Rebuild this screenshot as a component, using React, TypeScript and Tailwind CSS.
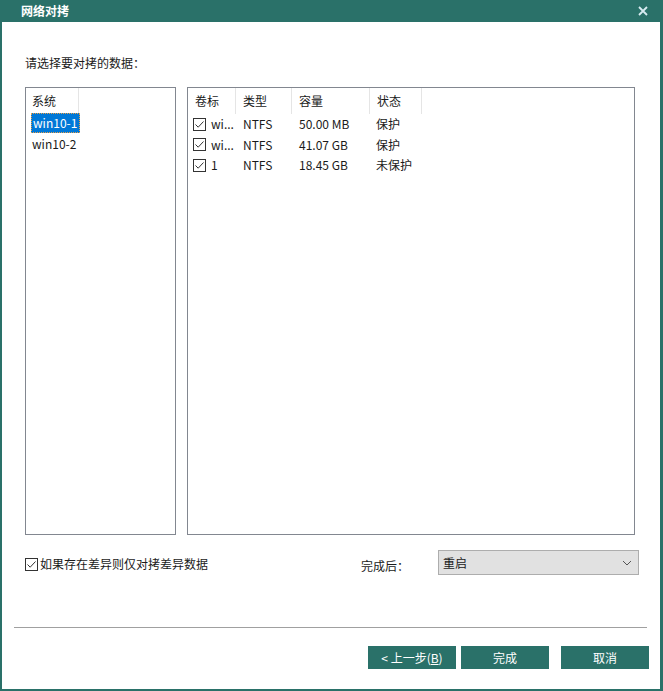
import React from "react";

const font = {
  fontFamily: '"Noto Sans CJK SC", "Noto Sans", sans-serif',
};

const teal = "bg-[#2a7169]";

interface Volume {
  label: string;
  type: string;
  size: string;
  status: string;
}

const volumes: Volume[] = [
  { label: "wi...", type: "NTFS", size: "50.00 MB", status: "保护" },
  { label: "wi...", type: "NTFS", size: "41.07 GB", status: "保护" },
  { label: "1", type: "NTFS", size: "18.45 GB", status: "未保护" },
];

function Check() {
  return (
    <span className="flex h-[13px] w-[13px] shrink-0 items-center justify-center border border-[#333] bg-white">
      <svg width="11" height="11" viewBox="0 0 11 11" fill="none">
        <path d="M1.5 5.5 L4.2 8.2 L9.5 2.5" stroke="#333" strokeWidth="1" />
      </svg>
    </span>
  );
}

function HeaderCell({ w, children }: { w: string; children?: React.ReactNode }) {
  return (
    <div className={`${w} flex h-[26px] items-center border-r border-[#e5e5e5] pl-[7px]`}>
      {children}
    </div>
  );
}

export default function App() {
  return (
    <div
      className="flex h-[691px] w-[663px] flex-col border-b-2 border-l-2 border-r-[3px] border-[#2a7169] bg-white text-[12px] text-[#1a1a1a]"
      style={font}
    >
      {/* title bar */}
      <div className={`${teal} flex h-[22px] shrink-0 items-center justify-between pl-[19px] pr-[12px]`}>
        <span className="text-[12px] font-bold text-white">网络对拷</span>
        <svg width="10" height="10" viewBox="0 0 10 10">
          <path d="M1 1 L9 9 M9 1 L1 9" stroke="#d8ecf2" strokeWidth="1.8" />
        </svg>
      </div>

      <div className="flex flex-1 flex-col">
        <div className="pl-[23px] pt-[32px] leading-[18px]">请选择要对拷的数据：</div>

        {/* panels */}
        <div className="mt-[15px] flex gap-[11px] pl-[23px]">
          <div className="h-[448px] w-[151px] border border-[#828790] bg-white">
            <div className="flex h-[25px] w-[53px] items-center border-r border-[#e5e5e5] pl-[6px]">
              系统
            </div>
            <div className="ml-[5px] flex h-[20px] w-[49px] items-center border border-dotted border-[#e8a04a] bg-[#0078d7] pl-[1px] text-white">
              win10-1
            </div>
            <div className="ml-[6px] flex h-[21px] items-center">win10-2</div>
          </div>

          <div className="h-[448px] w-[448px] border border-[#828790] bg-white">
            <div className="flex">
              <HeaderCell w="w-[48px]">卷标</HeaderCell>
              <HeaderCell w="w-[56px]">类型</HeaderCell>
              <HeaderCell w="w-[78px]">容量</HeaderCell>
              <HeaderCell w="w-[52px]">状态</HeaderCell>
            </div>
            {volumes.map((v, i) => (
              <div key={i} className="flex h-[20.5px] items-center">
                <div className="flex w-[48px] items-center gap-[5px] pl-[5px]">
                  <Check />
                  <span>{v.label}</span>
                </div>
                <div className="w-[56px] pl-[7px]">{v.type}</div>
                <div className="w-[78px] pl-[7px]">{v.size}</div>
                <div className="w-[52px] pl-[6px]">{v.status}</div>
              </div>
            ))}
          </div>
        </div>

        {/* options */}
        <div className="mt-[15px] flex items-center pl-[23px]">
          <div className="flex items-center gap-[2px] pt-[3px]">
            <Check />
            <span>如果存在差异则仅对拷差异数据</span>
          </div>
          <span className="ml-[153px] pt-[6px]">完成后：</span>
          <div className="ml-[29px] flex h-[25px] w-[201px] items-center justify-between border border-[#adadad] bg-[#e1e1e1] pl-[4px] pr-[6px]">
            <span>重启</span>
            <svg width="10" height="6" viewBox="0 0 10 6">
              <path d="M1 1 L5 5 L9 1" stroke="#555" strokeWidth="1" fill="none" />
            </svg>
          </div>
        </div>

        {/* separator */}
        <div className="ml-[12px] mr-[13px] mt-[52px] h-px bg-[#a0a0a0]" />

        {/* buttons */}
        <div className="mt-[18px] flex justify-end gap-[5px] pr-[11px]">
          <button className={`${teal} h-[23px] w-[88px] text-white`}>
            &lt;&nbsp;上一步(<span className="underline">B</span>)
          </button>
          <button className={`${teal} h-[23px] w-[88px] text-white`}>完成</button>
          <button className={`${teal} ml-[7px] h-[23px] w-[88px] text-white`}>取消</button>
        </div>
      </div>
    </div>
  );
}
